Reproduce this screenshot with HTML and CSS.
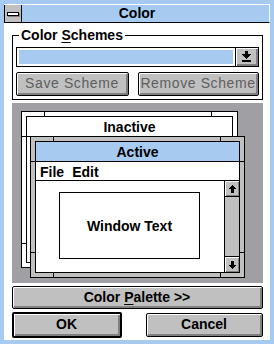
FILE: index.html
```html
<!DOCTYPE html>
<html lang="en">

<head>
    <meta charset="UTF-8">
    <title>Color</title>
    <link rel="stylesheet" href="styles.css">
</head>

<body>

    <div class="dlg">
        <div class="caption">
            <div class="sysmenu"><span class="sysbar"></span></div>
            <div class="caption-text">Color</div>
        </div>

        <div class="client">
            <!-- Color Schemes group -->
            <div class="group">
                <div class="group-label">Color <u>S</u>chemes</div>
                <div class="combo">
                    <div class="combo-field"><div class="combo-sel"></div></div>
                    <div class="combo-btn">
                        <svg width="9" height="11" viewBox="0 0 9 11" shape-rendering="crispEdges">
                            <rect x="3" y="0" width="3" height="3" fill="#000"/>
                            <rect x="0" y="3" width="9" height="1" fill="#000"/>
                            <rect x="1" y="4" width="7" height="1" fill="#000"/>
                            <rect x="2" y="5" width="5" height="1" fill="#000"/>
                            <rect x="3" y="6" width="3" height="1" fill="#000"/>
                            <rect x="4" y="7" width="1" height="1" fill="#000"/>
                            <rect x="0" y="9" width="9" height="2" fill="#000"/>
                        </svg>
                    </div>
                </div>
                <div class="btn-row">
                    <div class="btn disabled save">Save Scheme</div>
                    <div class="btn disabled remove">Remove Scheme</div>
                </div>
            </div>

            <!-- sample windows -->
            <div class="preview">
                <div class="win inactive">
                    <span class="tick tv" style="left:22px;top:0"></span>
                    <span class="tick tv" style="left:189px;top:0"></span>
                    <span class="tick th" style="left:0;top:24px"></span>
                    <span class="tick th" style="left:0;top:131px"></span>
                    <div class="win-in">
                        <div class="win-title">Inactive</div>
                    </div>
                </div>

                <div class="win active">
                    <span class="tick tv" style="left:22px;top:0"></span>
                    <span class="tick tv" style="left:189px;top:0"></span>
                    <span class="tick tv" style="left:22px;bottom:0"></span>
                    <span class="tick tv" style="left:189px;bottom:0"></span>
                    <span class="tick th" style="left:0;top:24px"></span>
                    <span class="tick th" style="left:0;bottom:24px"></span>
                    <span class="tick th" style="right:0;top:24px"></span>
                    <span class="tick th" style="right:0;bottom:24px"></span>
                    <div class="win-in">
                        <div class="win-title">Active</div>
                        <div class="menu"><span>File</span><span>Edit</span></div>
                        <div class="win-client">
                            <div class="text-area">
                                <div class="text-box">Window Text</div>
                            </div>
                            <div class="vscroll">
                                <div class="sbtn">
                                    <svg width="7" height="8" viewBox="0 0 7 8" shape-rendering="crispEdges">
                                        <rect x="3" y="0" width="1" height="1" fill="#000"/>
                                        <rect x="2" y="1" width="3" height="1" fill="#000"/>
                                        <rect x="1" y="2" width="5" height="1" fill="#000"/>
                                        <rect x="0" y="3" width="7" height="1" fill="#000"/>
                                        <rect x="2" y="4" width="3" height="4" fill="#000"/>
                                    </svg>
                                </div>
                                <div class="strack"></div>
                                <div class="sbtn">
                                    <svg width="7" height="8" viewBox="0 0 7 8" shape-rendering="crispEdges">
                                        <rect x="2" y="0" width="3" height="4" fill="#000"/>
                                        <rect x="0" y="4" width="7" height="1" fill="#000"/>
                                        <rect x="1" y="5" width="5" height="1" fill="#000"/>
                                        <rect x="2" y="6" width="3" height="1" fill="#000"/>
                                        <rect x="3" y="7" width="1" height="1" fill="#000"/>
                                    </svg>
                                </div>
                            </div>
                        </div>
                    </div>
                </div>
            </div>

            <div class="btn palette">Color <u>P</u>alette &gt;&gt;</div>

            <div class="btn-row bottom">
                <div class="btn default ok">OK</div>
                <div class="btn cancel">Cancel</div>
            </div>
        </div>
    </div>

</body>

</html>
```

FILE: styles.css
```css
* {
    padding: 0;
    margin: 0;
    box-sizing: border-box;
}

body {
    background: #fff;
    font-family: "Liberation Sans", Arial, sans-serif;
    font-weight: bold;
    font-size: 14px;
    color: #000;
}

u {
    text-decoration-thickness: 1px;
    text-underline-offset: 2px;
}

.dlg {
    width: 274px;
    height: 344px;
    background: #a6caf0;
    padding: 4px;
    display: flex;
    flex-direction: column;
}

/* title bar */
.caption {
    height: 19px;
    display: flex;
    background: #a6caf0;
    border-bottom: 1px solid #000;
    border-top: 1px solid #fff;
    border-right: 1px solid #fff;
}

.sysmenu {
    width: 18px;
    background: #c0c0c0;
    border-left: 1px solid #000;
    border-right: 1px solid #000;
    display: flex;
    align-items: center;
    justify-content: center;
}

.sysbar {
    width: 12px;
    height: 4px;
    background: #fff;
    border: 1px solid #000;
    box-shadow: 1px 1px 0 #808080;
}

.caption-text {
    flex: 1;
    text-align: center;
    line-height: 17px;
    padding-right: 17px;
}

.client {
    flex: 1;
    background: #fff;
    padding: 12px 7px 0 8px;
    display: flex;
    flex-direction: column;
}

/* group box */
.group {
    position: relative;
    height: 65px;
    border: 1px solid #000;
    padding: 11px 3px 0 3px;
}

.group-label {
    position: absolute;
    left: 6px;
    top: -9px;
    background: #fff;
    padding: 0 2px;
    line-height: 16px;
}

.combo {
    height: 20px;
    display: flex;
    border: 1px solid #000;
}

.combo-field {
    flex: 1;
    padding: 2px;
}

.combo-sel {
    height: 100%;
    background: #a6caf0;
}

.combo-btn {
    width: 23px;
    border-left: 1px solid #000;
    background: #c0c0c0;
    box-shadow: inset 1px 1px #fff, inset -2px -2px #808080;
    display: flex;
    align-items: center;
    justify-content: center;
    padding: 0 1px 1px 0;
}

.btn-row {
    display: flex;
    justify-content: space-between;
    margin-top: 5px;
}

/* push buttons */
.btn {
    height: 24px;
    background: #c0c0c0;
    border: 1px solid #000;
    border-radius: 2px;
    box-shadow: inset 1px 1px #fff, inset -2px -2px #808080;
    text-align: center;
    line-height: 21px;
    padding-right: 1px;
}

.btn.disabled {
    color: #5e5e5e;
    font-weight: normal;
    letter-spacing: 0.6px;
}

.save {
    width: 113px;
}

.remove {
    width: 121px;
}

/* preview of window colours */
.preview {
    position: relative;
    height: 180px;
    margin-top: 3px;
    background: #a0a0a4;
}

.win {
    position: absolute;
    border: 1px solid #000;
    padding: 4px;
}

.win.inactive {
    left: 9px;
    top: 8px;
    width: 217px;
    height: 157px;
    background: #fff;
}

.win.active {
    left: 18px;
    top: 33px;
    width: 215px;
    height: 142px;
    background: #c0c0c0;
}

.tick {
    position: absolute;
    background: #000;
}

.tv {
    width: 1px;
    height: 4px;
}

.th {
    width: 4px;
    height: 1px;
}

.win-in {
    height: 100%;
    border: 1px solid #000;
    background: #fff;
    display: flex;
    flex-direction: column;
}

.win-title {
    height: 20px;
    border-bottom: 1px solid #000;
    text-align: center;
    line-height: 19px;
    padding-top: 1px;
}

.active .win-title {
    background: #a6caf0;
}

.menu {
    height: 19px;
    border-bottom: 1px solid #000;
    line-height: 18px;
    padding: 1px 0 0 4px;
    display: flex;
    gap: 8px;
}

.win-client {
    flex: 1;
    display: flex;
}

.text-area {
    flex: 1;
    padding: 11px 0 0 23px;
}

.text-box {
    width: 141px;
    height: 67px;
    border: 1px solid #000;
    display: flex;
    align-items: center;
    justify-content: center;
}

.vscroll {
    width: 15px;
    border-left: 1px solid #000;
    background: #c0c0c0;
    display: flex;
    flex-direction: column;
}

.sbtn {
    height: 15px;
    background: #c0c0c0;
    box-shadow: inset 1px 1px #fff, inset -1px -1px #808080;
    display: flex;
    align-items: center;
    justify-content: center;
}

.strack {
    flex: 1;
    border-top: 1px solid #000;
    border-bottom: 1px solid #000;
}

/* bottom buttons */
.palette {
    margin-top: 3px;
    height: 23px;
    line-height: 20px;
}

.btn-row.bottom {
    margin-top: 3px;
    align-items: center;
}

.ok {
    width: 110px;
    height: 26px;
    border-width: 2px;
    line-height: 21px;
}

.cancel {
    width: 117px;
}
```
